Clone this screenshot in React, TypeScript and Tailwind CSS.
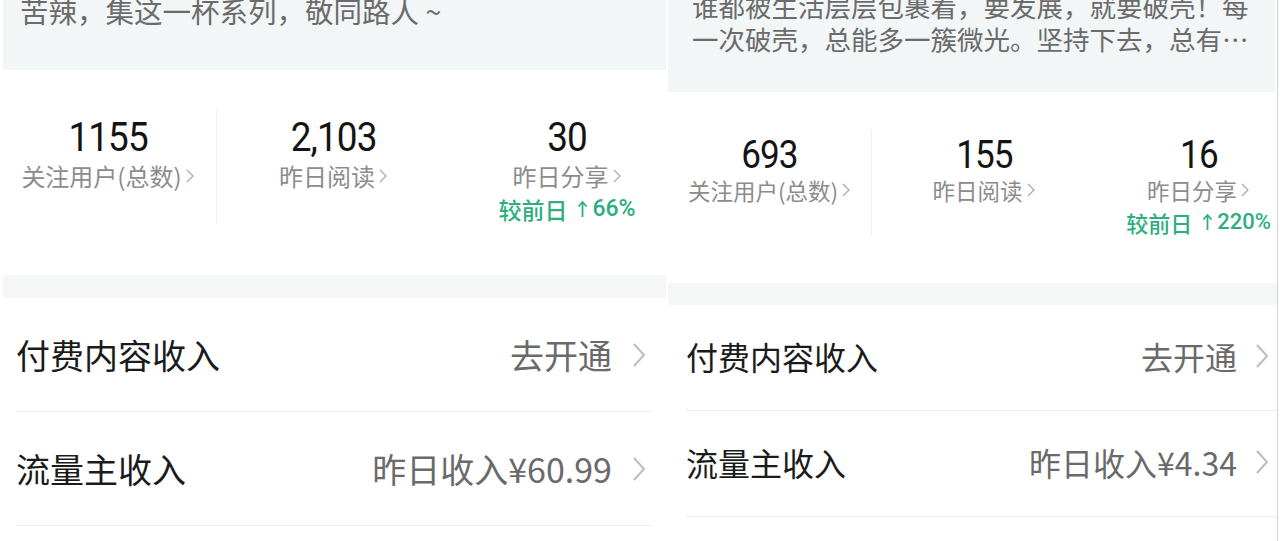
import React from 'react';

type Stat = { value: string; label: string; change?: string };

type PanelStyle = {
  wrap: string;
  top: string;
  topText: string;
  stats: string;
  cols: string;
  divider: string;
  third: string;
  value: string;
  label: string;
  change: string;
  band: string;
  row: string;
  rowTitle: string;
  rowValue: string;
  rowLine: string;
};

const CJK = "font-['Noto_Sans_CJK_SC',sans-serif]";

function SmallChevron() {
  return (
    <svg width="10" height="16" viewBox="0 0 10 16" className="ml-[3px] shrink-0">
      <polyline points="2,2 8,8 2,14" fill="none" stroke="#acacac" strokeWidth="1.3" />
    </svg>
  );
}

function RowChevron() {
  return (
    <svg width="14" height="26" viewBox="0 0 14 26" className="shrink-0">
      <polyline points="2,2 12,13 2,24" fill="none" stroke="#bdbdbd" strokeWidth="2" />
    </svg>
  );
}

function UpArrow() {
  return (
    <svg width="11" height="18" viewBox="0 0 11 18" className="ml-[10px] mr-[4px]">
      <line x1="5.5" y1="2" x2="5.5" y2="17" stroke="currentColor" strokeWidth="1.8" />
      <polyline points="1.5,6.5 5.5,2 9.5,6.5" fill="none" stroke="currentColor" strokeWidth="1.8" />
    </svg>
  );
}

function Panel({
  intro,
  stats,
  income,
  s,
}: {
  intro: string[];
  stats: Stat[];
  income: string;
  s: PanelStyle;
}) {
  const rows = [
    { title: '付费内容收入', value: '去开通' },
    { title: '流量主收入', value: income },
  ];

  return (
    <div className={`flex flex-col bg-white overflow-hidden ${CJK} ${s.wrap}`}>
      {/* intro text block */}
      <div className={`bg-[#f2f6f7] overflow-hidden ${s.top}`}>
        {intro.map((line) => (
          <p key={line} className={`text-[#6b6b6b] whitespace-nowrap ${s.topText}`}>
            {line}
          </p>
        ))}
      </div>

      {/* stats */}
      <div className={`grid ${s.stats} ${s.cols}`}>
        {stats.map((stat, i) => (
          <div
            key={stat.label}
            className={`flex flex-col items-center ${i === 0 ? s.divider : ''} ${i === 2 ? s.third : ''}`}
          >
            <span className={`font-['Roboto',sans-serif] text-[#141414] scale-x-[0.9] ${s.value}`}>{stat.value}</span>
            <span className={`flex items-center text-[#8c8c8c] ${s.label}`}>
              {stat.label}
              <SmallChevron />
            </span>
            {stat.change && (
              <span className={`flex items-center text-[#2dae7f] font-medium whitespace-nowrap ${s.change}`}>
                较前日
                <UpArrow />
                <span className="font-['Roboto',sans-serif]">{stat.change}</span>
              </span>
            )}
          </div>
        ))}
      </div>

      <div className={`bg-[#f5f7f7] ${s.band}`} />

      {/* income rows */}
      <div className="flex flex-col">
        {rows.map((row) => (
          <div key={row.title} className={`flex items-center border-b border-[#ededed] ${s.row} ${s.rowLine}`}>
            <span className={`flex-1 text-[#1b1b1b] ${s.rowTitle}`}>{row.title}</span>
            <span className={`text-[#6a6a6a] ${s.rowValue}`}>{row.value}</span>
            <RowChevron />
          </div>
        ))}
      </div>
    </div>
  );
}

const leftStyle: PanelStyle = {
  wrap: 'w-[666px]',
  top: 'ml-[3px] h-[70px] pl-[17px]',
  topText: 'text-[28.5px] leading-[34px] mt-[-6px]',
  stats: 'h-[205px] pt-[45px]',
  cols: 'grid-cols-[217px_233px_216px]',
  divider: 'border-r border-[#efefef] h-[113px] mt-[-5px] pt-[5px]',
  third: 'pl-[18px]',
  value: 'text-[41px] leading-[44px] tracking-[-1px]',
  label: 'text-[24px] leading-[30px] mt-[2px]',
  change: 'text-[23px] leading-[26px] mt-[5px]',
  band: 'ml-[3px] h-[23px]',
  row: 'h-[114px]',
  rowTitle: 'text-[34px]',
  rowValue: 'text-[34px] mr-[20px]',
  rowLine: 'ml-[16px] mr-[14px] pr-[6px]',
};

const rightStyle: PanelStyle = {
  wrap: 'w-[609px] ml-[2px]',
  top: 'h-[92px] pl-[24px] mr-[2px]',
  topText: 'text-[26.5px] leading-[33px] first:mt-[-11px]',
  stats: 'h-[191px] pt-[43px]',
  cols: 'grid-cols-[204px_224px_181px]',
  divider: 'border-r border-[#efefef] h-[105px] mt-[-5px] pt-[5px]',
  third: 'pl-[24px]',
  value: 'text-[39px] leading-[40px] tracking-[-1px]',
  label: 'text-[22.5px] leading-[28px] mt-[1px]',
  change: 'text-[22px] leading-[26px] mt-[5px]',
  band: 'h-[22px]',
  row: 'h-[106px] pb-[3px]',
  rowTitle: 'text-[32px]',
  rowValue: 'text-[32px] mr-[18px]',
  rowLine: 'ml-[18px] pr-[8px]',
};

export default function App() {
  return (
    <div className="w-[1280px] h-[541px] bg-white flex overflow-hidden">
      <Panel
        intro={['苦辣，集这一杯系列，敬同路人 ~']}
        stats={[
          { value: '1155', label: '关注用户(总数)' },
          { value: '2,103', label: '昨日阅读' },
          { value: '30', label: '昨日分享', change: '66%' },
        ]}
        income="昨日收入¥60.99"
        s={leftStyle}
      />
      <Panel
        intro={['谁都被生活层层包裹着，要发展，就要破壳！每', '一次破壳，总能多一簇微光。坚持下去，总有…']}
        stats={[
          { value: '693', label: '关注用户(总数)' },
          { value: '155', label: '昨日阅读' },
          { value: '16', label: '昨日分享', change: '220%' },
        ]}
        income="昨日收入¥4.34"
        s={rightStyle}
      />
      <div className="w-[3px] border-l border-[#d4d4d4] bg-white" />
    </div>
  );
}
